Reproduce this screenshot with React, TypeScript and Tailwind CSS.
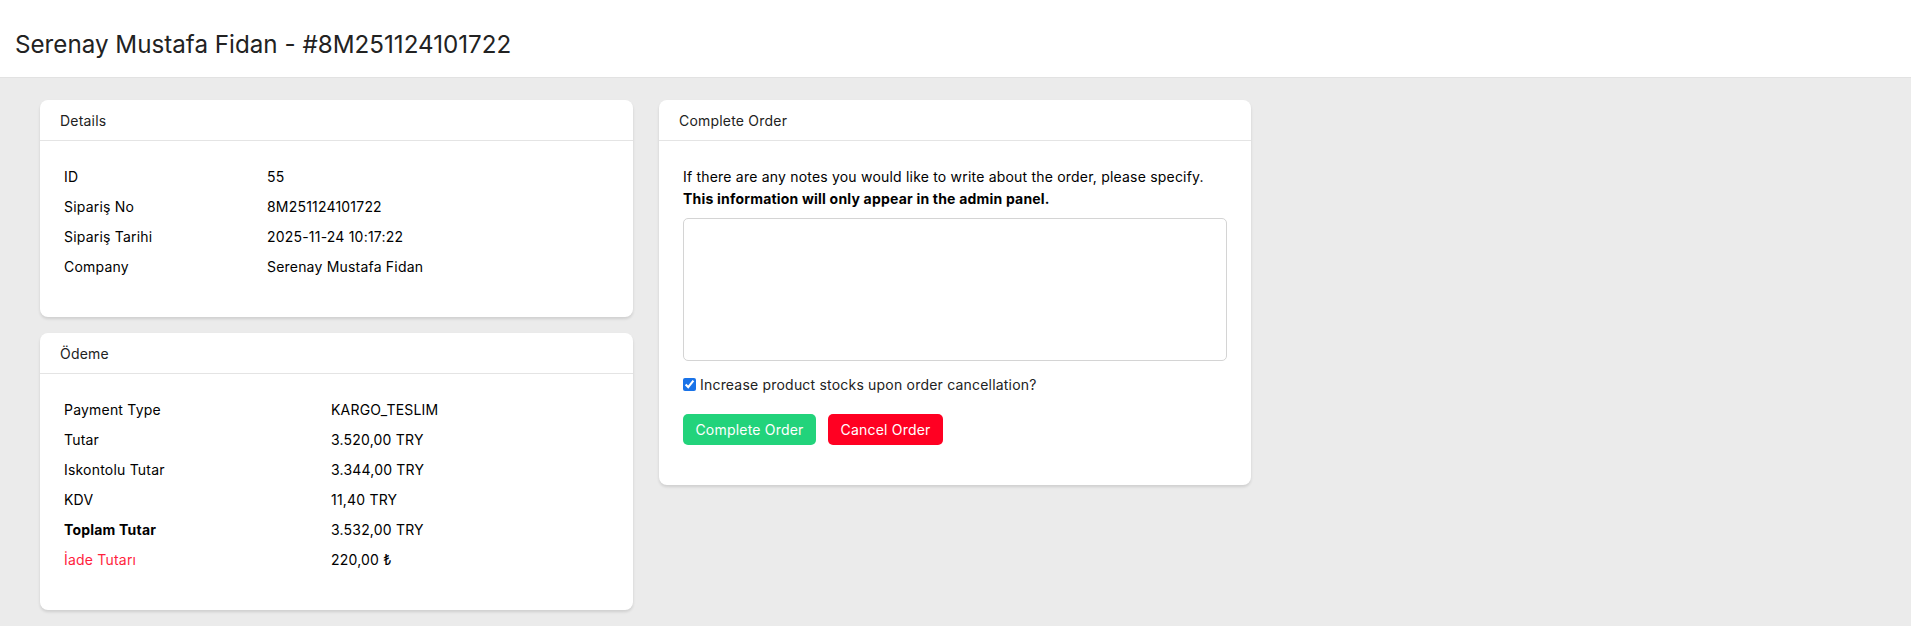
import React from "react";

const details = [
    ["ID", "55"],
    ["Sipariş No", "8M251124101722"],
    ["Sipariş Tarihi", "2025-11-24 10:17:22"],
    ["Company", "Serenay Mustafa Fidan"],
];

const payment = [
    ["Payment Type", "KARGO_TESLIM"],
    ["Tutar", "3.520,00 TRY"],
    ["Iskontolu Tutar", "3.344,00 TRY"],
    ["KDV", "11,40 TRY"],
];

function Card({ title, children }: { title: string; children: React.ReactNode }) {
    return (
        <div className="bg-white rounded-lg shadow-[0_2px_3px_rgba(0,0,0,0.12)]">
            <div className="h-[41px] flex items-center px-5 border-b border-[#e4e4e4] text-[14px] text-[#222]">
                {title}
            </div>
            {children}
        </div>
    );
}

export default function App() {
    return (
        <div className="min-h-screen bg-[#ebebeb] font-['Inter',sans-serif] text-[14px] tracking-[0.2px] text-black">
            <div className="h-[78px] bg-white flex items-center pt-[14px] px-[15px] border-b border-[#e2e2e2]">
                <h1 className="text-[24.2px] text-[#222] tracking-normal">Serenay Mustafa Fidan - #8M251124101722</h1>
            </div>

            <div className="flex gap-[26px] pt-[22px] pl-10">
                <div className="w-[593px] flex flex-col gap-4">
                    <Card title="Details">
                        <div className="px-6 pt-5 pb-9">
                            {details.map(([k, v]) => (
                                <div key={k} className="h-[30px] flex items-center">
                                    <div className="w-[203px]">{k}</div>
                                    <div>{v}</div>
                                </div>
                            ))}
                        </div>
                    </Card>

                    <Card title="Ödeme">
                        <div className="px-6 pt-5 pb-9">
                            {payment.map(([k, v]) => (
                                <div key={k} className="h-[30px] flex items-center">
                                    <div className="w-[267px]">{k}</div>
                                    <div>{v}</div>
                                </div>
                            ))}
                            <div className="h-[30px] flex items-center">
                                <div className="w-[267px] font-bold">Toplam Tutar</div>
                                <div>3.532,00 TRY</div>
                            </div>
                            <div className="h-[30px] flex items-center">
                                <div className="w-[267px] text-[#ff1f3d]">İade Tutarı</div>
                                <div>220,00 ₺</div>
                            </div>
                        </div>
                    </Card>
                </div>

                <div className="w-[592px] self-start">
                    <Card title="Complete Order">
                        <div className="px-6 pt-[25px] pb-10">
                            <p className="leading-[22px]">
                                If there are any notes you would like to write about the order, please specify.
                                <br />
                                <b>This information will only appear in the admin panel.</b>
                            </p>
                            <textarea className="mt-2 block w-full h-[143px] border border-[#d4d4d4] rounded-[5px] resize-none outline-none" />
                            <label className="mt-3 h-[22px] flex items-center gap-[4px] text-[#222]">
                                <input type="checkbox" defaultChecked className="w-[13px] h-[13px] m-0 accent-[#1a73e8]" />
                                <span>Increase product stocks upon order cancellation?</span>
                            </label>
                            <div className="mt-[19px] flex gap-3">
                                <button className="h-[31px] w-[133px] rounded-[5px] bg-[#22d37b] text-white">Complete Order</button>
                                <button className="h-[31px] w-[115px] rounded-[5px] bg-[#ff0022] text-white">Cancel Order</button>
                            </div>
                        </div>
                    </Card>
                </div>
            </div>
        </div>
    );
}
